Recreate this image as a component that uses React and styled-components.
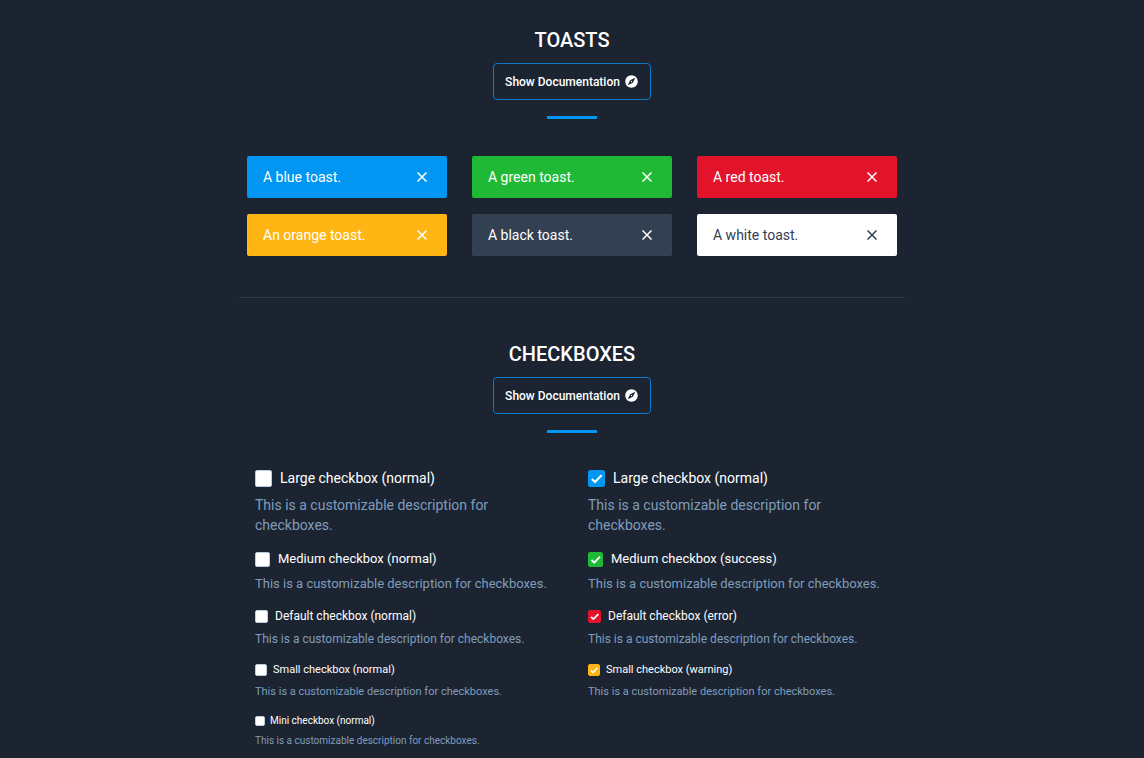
import React, { useId, useState } from "react";
import styled, { createGlobalStyle } from "styled-components";
import { MdExplore } from "react-icons/md";

const colors = {
  background: "#1c2432",
  blue: "#0096f2",
  green: "#1fb935",
  red: "#e2132b",
  orange: "#ffb514",
  black: "#334052",
  white: "#ffffff",
  muted: "#7f9dbb",
};

const sizes = {
  large: { box: 17, font: 14, gap: 8, line: 20 },
  medium: { box: 15, font: 13, gap: 8, line: 18 },
  default: { box: 13, font: 12, gap: 7, line: 16 },
  small: { box: 12, font: 11, gap: 6, line: 15 },
  mini: { box: 10, font: 10, gap: 5, line: 13 },
};

const toasts = [
  { text: "A blue toast.", color: "blue" },
  { text: "A green toast.", color: "green" },
  { text: "A red toast.", color: "red" },
  { text: "An orange toast.", color: "orange" },
  { text: "A black toast.", color: "black" },
  { text: "A white toast.", color: "white" },
];

const normalBoxes = [
  { label: "Large checkbox (normal)", size: "large" },
  { label: "Medium checkbox (normal)", size: "medium" },
  { label: "Default checkbox (normal)", size: "default" },
  { label: "Small checkbox (normal)", size: "small" },
  { label: "Mini checkbox (normal)", size: "mini" },
];

const checkedBoxes = [
  { label: "Large checkbox (normal)", size: "large", color: "blue" },
  { label: "Medium checkbox (success)", size: "medium", color: "green" },
  { label: "Default checkbox (error)", size: "default", color: "red" },
  { label: "Small checkbox (warning)", size: "small", color: "orange" },
];

const SectionHeader = ({ title }) => (
  <Header>
    <Title>{title}</Title>
    <DocButton type="button">
      Show Documentation
      <MdExplore size={15} aria-hidden="true" />
    </DocButton>
    <Accent />
  </Header>
);

const Toast = ({ text, color }) => (
  <ToastBox $color={color}>
    <span>{text}</span>
    <CloseButton type="button" aria-label="Close">
      <svg width="10" height="10" viewBox="0 0 10 10" aria-hidden="true">
        <path d="M0.5 0.5 9.5 9.5M9.5 0.5 0.5 9.5" stroke="currentColor" strokeWidth="1.5" />
      </svg>
    </CloseButton>
  </ToastBox>
);

const Checkbox = ({ label, size, color }) => {
  const id = useId();
  const [checked, setChecked] = useState(Boolean(color));

  return (
    <Field>
      <Label htmlFor={id} $size={sizes[size]}>
        <Control $size={sizes[size]}>
          <Box
            id={id}
            type="checkbox"
            $color={color || "blue"}
            checked={checked}
            aria-describedby={`${id}-text`}
            onChange={() => setChecked(!checked)}
          />
          {checked && (
            <svg viewBox="0 0 16 16" fill="none" aria-hidden="true">
              <path d="M3.7 8.4 6.6 11.3 12.8 5" stroke="#fff" strokeWidth="2" />
            </svg>
          )}
        </Control>
        {label}
      </Label>
      <Description id={`${id}-text`} $size={sizes[size]}>
        This is a customizable description for checkboxes.
      </Description>
    </Field>
  );
};

const App = () => {
  return (
    <>
      <GlobalStyle />
      <Main>
        <Section>
          <SectionHeader title="TOASTS" />
          <ToastGrid>
            {toasts.map((toast) => (
              <Toast key={toast.color} {...toast} />
            ))}
          </ToastGrid>
        </Section>
        <Section>
          <SectionHeader title="CHECKBOXES" />
          <Columns>
            <div>
              {normalBoxes.map((box) => (
                <Checkbox key={box.size} {...box} />
              ))}
            </div>
            <div>
              {checkedBoxes.map((box) => (
                <Checkbox key={box.size} {...box} />
              ))}
            </div>
          </Columns>
        </Section>
      </Main>
    </>
  );
};

const GlobalStyle = createGlobalStyle`
  * {
    box-sizing: border-box;
  }

  body {
    margin: 0;
    background: ${colors.background};
    color: #fff;
    font-family: Roboto, sans-serif;
  }

  button {
    font-family: inherit;
    cursor: pointer;
  }
`;

const Main = styled.main`
  max-width: 666px;
  margin: 0 auto;
`;

const Section = styled.section`
  padding-top: 28px;

  & + & {
    margin-top: 41px;
    padding-top: 44px;
    border-top: 1px solid #2e3a4a;
  }
`;

const Header = styled.header`
  display: flex;
  flex-direction: column;
  align-items: center;
`;

const Title = styled.h2`
  margin: 0 0 11px;
  font-size: 20px;
  font-weight: 500;
  line-height: 24px;
`;

const DocButton = styled.button`
  display: flex;
  align-items: center;
  gap: 4px;
  height: 37px;
  padding: 0 11px;
  border: 1px solid #0b79c4;
  border-radius: 4px;
  background: transparent;
  color: #fff;
  font-size: 12px;
  font-weight: 500;
`;

const Accent = styled.div`
  width: 50px;
  height: 3px;
  margin-top: 16px;
  background: ${colors.blue};
`;

const ToastGrid = styled.div`
  display: grid;
  grid-template-columns: repeat(3, 1fr);
  gap: 16px 25px;
  padding: 37px 8px 0;
`;

const ToastBox = styled.div`
  display: flex;
  align-items: center;
  justify-content: space-between;
  height: 42px;
  padding: 0 16px;
  border-radius: 2px;
  background: ${(props) => colors[props.$color]};
  color: ${(props) => (props.$color === "white" ? colors.black : "#fff")};
  font-size: 14px;
`;

const CloseButton = styled.button`
  display: flex;
  padding: 4px;
  border: 0;
  background: none;
  color: inherit;
`;

const Columns = styled.div`
  display: grid;
  grid-template-columns: repeat(2, 1fr);
  padding-top: 35px;
`;

const Field = styled.div`
  padding: 0 16px;

  & + & {
    margin-top: 15px;
  }
`;

const Label = styled.label`
  display: flex;
  align-items: center;
  gap: ${(props) => props.$size.gap}px;
  font-size: ${(props) => props.$size.font}px;
  line-height: ${(props) => props.$size.line}px;
  cursor: pointer;
`;

const Control = styled.span`
  display: grid;
  width: ${(props) => props.$size.box}px;
  height: ${(props) => props.$size.box}px;

  & > * {
    grid-area: 1 / 1;
    width: 100%;
    height: 100%;
  }

  svg {
    pointer-events: none;
    z-index: 1;
  }
`;

const Box = styled.input`
  appearance: none;
  margin: 0;
  border: 1px solid #b9cee3;
  border-radius: 2px;
  background: #fff;
  cursor: pointer;

  &:checked {
    border-color: ${(props) => colors[props.$color]};
    background: ${(props) => colors[props.$color]};
  }
`;

const Description = styled.p`
  margin: 7px 0 0;
  color: ${colors.muted};
  font-size: ${(props) => props.$size.font}px;
  line-height: ${(props) => props.$size.line}px;
`;

export default App;
